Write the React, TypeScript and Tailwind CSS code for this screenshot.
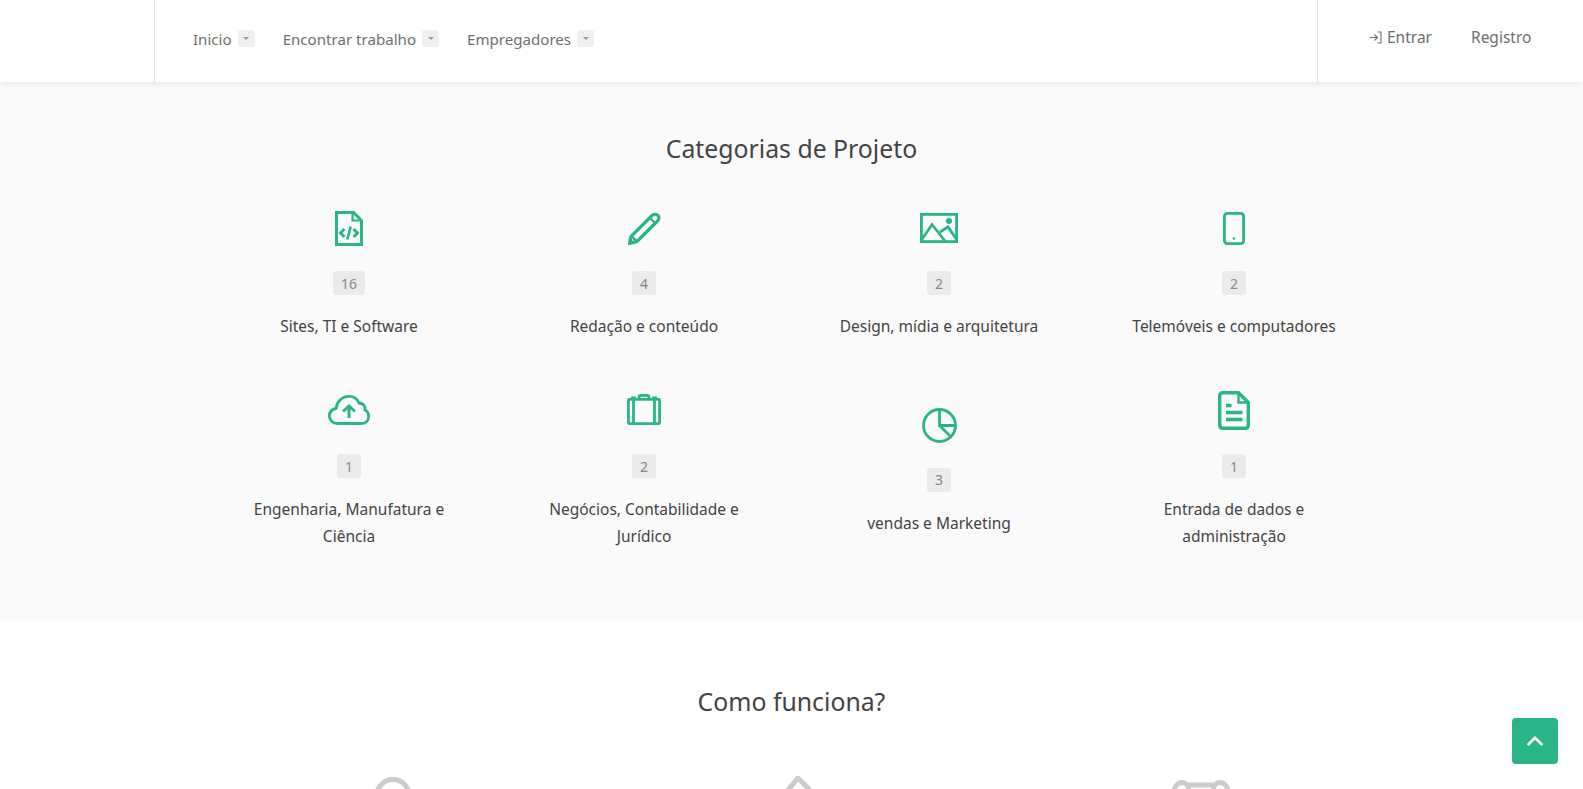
import { ChevronUp } from 'lucide-react'

const navItems = [
  { label: 'Inicio', className: 'mr-[28px]' },
  { label: 'Encontrar trabalho', className: 'mr-[28px]' },
  { label: 'Empregadores', className: '' },
]

function FileCodeIcon() {
  return (
    <svg width="28" height="35" viewBox="0 0 28 35" fill="none" stroke="currentColor" strokeWidth="3">
      <path d="M1.5 1.5H18.5L26.5 9.5V33.5H1.5Z" />
      <path d="M17.5 1.5V9.5H26.5" strokeWidth="2.2" />
      <path d="M9.5 18L5.5 22L9.5 26M18.5 18L22.5 22L18.5 26" />
      <path d="M15.7 15.5L12.3 28.5" strokeWidth="2.6" />
    </svg>
  )
}

function PencilIcon() {
  return (
    <svg width="33" height="33" viewBox="0 0 33 33" fill="none" stroke="currentColor" strokeWidth="3.2">
      <path d="M1.5 31.5L3 24.5L23.5 4C25.5 2 28.5 2 30 3.5C31.5 5 31 7.5 29.5 9L9 29.5Z" />
      <path d="M3.5 24.5L9 29.5M22 6L27.5 11.5" strokeWidth="2.4" />
      <path d="M0.5 32.5L7 31L2.5 26.5Z" fill="currentColor" stroke="none" />
    </svg>
  )
}

function ImageIcon() {
  return (
    <svg width="38" height="30" viewBox="0 0 38 30" fill="none" stroke="currentColor" strokeWidth="2.8">
      <rect x="1.4" y="1.4" width="35.2" height="27.2" />
      <path d="M1.5 27L12 11.5L25 28M20 19L28 14L37 27" />
      <circle cx="29" cy="8" r="3" fill="currentColor" stroke="none" />
    </svg>
  )
}

function PhoneIcon() {
  return (
    <svg width="22" height="33" viewBox="0 0 22 33" fill="none" stroke="currentColor" strokeWidth="2.8">
      <rect x="1.4" y="1.4" width="19.2" height="30.2" rx="3" />
      <circle cx="11" cy="26.5" r="1.3" fill="currentColor" stroke="none" />
    </svg>
  )
}

function CloudUploadIcon() {
  return (
    <svg width="42" height="30" viewBox="0 0 42 30" fill="none" stroke="currentColor" strokeWidth="2.8" className="-mt-[2px]">
      <path d="M9.5 28.5C4.5 28.5 1.4 25 1.4 21C1.4 17 4 14.2 8 13.5C9 6.5 14 1.4 21 1.4C26 1.4 29.5 4 31 8C36.5 8.5 37.5 12.5 37 15C39.5 16 40.6 18.5 40.6 21.5C40.6 25.5 38 28.5 33.5 28.5Z" />
      <path d="M21 23V11M15 16.5L21 11L27 16.5" strokeWidth="3" />
    </svg>
  )
}

function BriefcaseIcon() {
  return (
    <svg width="34" height="31" viewBox="0 0 34 31" fill="none" stroke="currentColor" strokeWidth="2.8" className="-mt-[4px]">
      <rect x="1.4" y="5.4" width="31.2" height="24.2" rx="1" />
      <path d="M6.5 5V30M27.5 5V30" />
      <path d="M12 5V3C12 1.8 12.8 1.4 14 1.4H20C21.2 1.4 22 1.8 22 3V5" />
      <path d="M5 5V3.5H8V5M26 5V3.5H29V5" strokeWidth="1.8" />
    </svg>
  )
}

function PieIcon() {
  return (
    <svg width="35" height="35" viewBox="0 0 35 35" fill="none" stroke="currentColor" strokeWidth="2.8" className="mt-[2px]">
      <circle cx="17.5" cy="17.5" r="16" />
      <path d="M17.5 1.5V17.5H33.5M17.5 17.5L29 29" />
    </svg>
  )
}

function DocumentIcon() {
  return (
    <svg width="32" height="39" viewBox="0 0 32 39" fill="none" stroke="currentColor" strokeWidth="3.4" className="-mt-px">
      <path d="M4.5 1.7H20.5L30.3 11.5V34C30.3 36 29 37.3 27 37.3H5C3 37.3 1.7 36 1.7 34V4.5C1.7 3 3 1.7 4.5 1.7Z" />
      <path d="M20.5 1.5V11.5H30.5" strokeWidth="2.4" />
      <path d="M8 14.5H13.5M8 21.5H24.5M8 28.5H24.5" />
    </svg>
  )
}

const categories = [
  { icon: <FileCodeIcon />, count: '16', label: 'Sites, TI e Software' },
  { icon: <PencilIcon />, count: '4', label: 'Redação e conteúdo' },
  { icon: <ImageIcon />, count: '2', label: 'Design, mídia e arquitetura' },
  { icon: <PhoneIcon />, count: '2', label: 'Telemóveis e computadores' },
  { icon: <CloudUploadIcon />, count: '1', label: 'Engenharia, Manufatura e Ciência' },
  { icon: <BriefcaseIcon />, count: '2', label: 'Negócios, Contabilidade e Jurídico' },
  { icon: <PieIcon />, count: '3', label: 'vendas e Marketing' },
  { icon: <DocumentIcon />, count: '1', label: 'Entrada de dados e administração' },
]

function Caret() {
  return (
    <span className="ml-[6px] flex h-[17px] w-[17px] items-center justify-center rounded-[3px] bg-[#f0f0f0]">
      <span className="h-0 w-0 border-x-[3px] border-t-[3px] border-x-transparent border-t-[#999]" />
    </span>
  )
}

export default function App() {
  return (
    <div className="h-screen overflow-hidden bg-white font-['Noto_Sans','Open_Sans',sans-serif] text-[15.5px] text-[#444]">
      {/* Header */}
      <header className="relative z-10 flex h-[82px] bg-white text-[#707070] shadow-[0_0_8px_rgba(0,0,0,0.12)]">
        <div className="w-[155px] border-r border-[#e0e0e0]" />
        <nav className="flex flex-1 items-center pb-[4px] pl-[38px] text-[15.1px]">
          {navItems.map((item) => (
            <a key={item.label} className={`flex items-center ${item.className}`}>
              {item.label}
              <Caret />
            </a>
          ))}
        </nav>
        <div className="flex w-[266px] items-start border-l border-[#e0e0e0] pl-[51px] pt-[26px]">
          <a className="flex items-center">
            <svg width="13" height="13" viewBox="0 0 13 13" fill="none" stroke="currentColor" strokeWidth="1.1" className="mr-[5px]">
              <path d="M0.5 6.5H8M5.5 3.5L8.5 6.5L5.5 9.5" />
              <path d="M8.5 1H12V12H8.5" />
            </svg>
            Entrar
          </a>
          <a className="ml-[39px]">Registro</a>
        </div>
      </header>

      {/* Categorias */}
      <section className="bg-[#fafafa] pb-[70px] pt-[46px]">
        <h2 className="text-center text-[24.8px] leading-[40px] text-[#444]">Categorias de Projeto</h2>
        <div className="mx-auto mt-[40px] grid w-[1180px] grid-cols-4 items-center gap-y-[51px]">
          {categories.map((category) => (
            <div key={category.label} className="flex flex-col items-center px-[40px] text-center">
              <div className="flex h-[40px] items-center justify-center text-[#2ab589]">{category.icon}</div>
              <span className="mt-[23px] flex h-[24px] min-w-[24px] items-center justify-center rounded-[3px] bg-[#ebebeb] px-[8px] text-[14px] text-[#888]">
                {category.count}
              </span>
              <p className="mt-[18px] leading-[27px]">{category.label}</p>
            </div>
          ))}
        </div>
      </section>

      {/* Como funciona */}
      <section className="bg-white pt-[61px]">
        <h2 className="text-center text-[24.8px] leading-[40px] text-[#444]">Como funciona?</h2>
        <div className="ml-[190px] mt-[55px] grid w-[1215px] grid-cols-3 justify-items-center text-[#ccc]">
          <svg width="60" height="50" viewBox="0 0 60 50" fill="none" stroke="currentColor" strokeWidth="5">
            <circle cx="30" cy="19.5" r="16" />
          </svg>
          <svg width="60" height="50" viewBox="0 0 60 50" fill="none" stroke="currentColor" strokeWidth="5">
            <path d="M10 26L30 2L42 14M24 26L34 14" />
          </svg>
          <svg width="60" height="50" viewBox="0 0 60 50" fill="none" stroke="currentColor" strokeWidth="5" className="-ml-[4px] mt-[3px]">
            <path d="M3 14C3 7 7 3.5 11 3.5C15 3.5 18 7 18 14M57 14C57 7 53 3.5 49 3.5C45 3.5 42 7 42 14M16 6H44" />
          </svg>
        </div>
      </section>

      {/* Back to top */}
      <a className="fixed bottom-[25px] right-[25px] flex h-[46px] w-[46px] items-center justify-center rounded-[4px] bg-[#2ab589] text-white">
        <ChevronUp size={26} strokeWidth={2.4} />
      </a>
    </div>
  )
}
